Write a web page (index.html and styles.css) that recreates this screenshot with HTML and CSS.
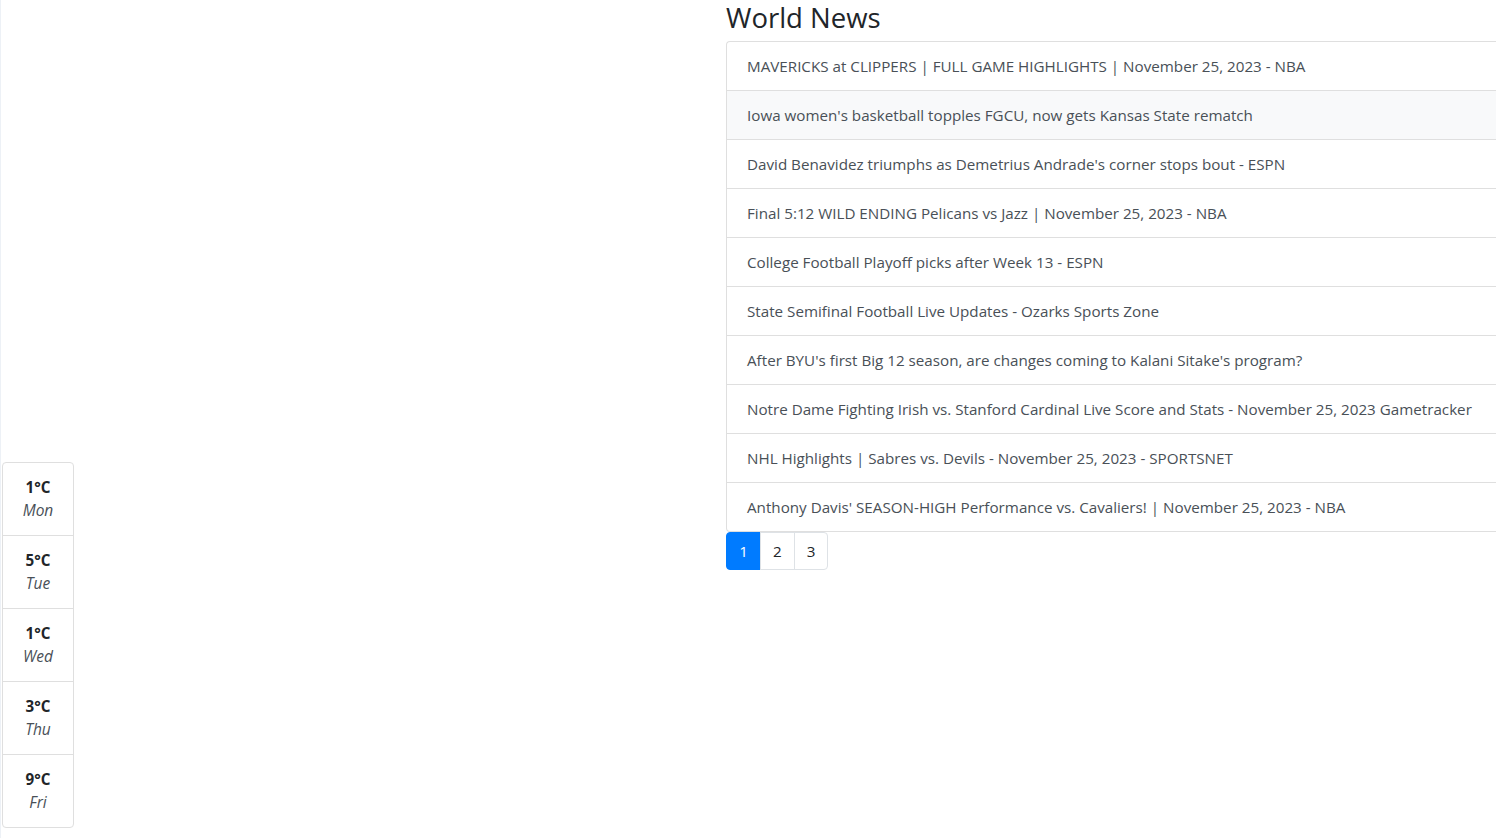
FILE: index.html
```html
<!DOCTYPE html>
<html lang="en">
<head>
<meta charset="utf-8">
<title>World News</title>
<link rel="stylesheet" href="styles.css">
</head>
<body>
<div class="page">
  <aside class="side">
    <ul class="weather">
      <li class="day"><strong>1°C</strong><em>Mon</em></li>
      <li class="day"><strong>5°C</strong><em>Tue</em></li>
      <li class="day"><strong>1°C</strong><em>Wed</em></li>
      <li class="day"><strong>3°C</strong><em>Thu</em></li>
      <li class="day"><strong>9°C</strong><em>Fri</em></li>
    </ul>
  </aside>
  <main class="news">
    <h3 class="title">World News</h3>
    <div class="list">
      <a class="item" href="#">MAVERICKS at CLIPPERS | FULL GAME HIGHLIGHTS | November 25, 2023 - NBA</a>
      <a class="item hover" href="#">Iowa women's basketball topples FGCU, now gets Kansas State rematch</a>
      <a class="item" href="#">David Benavidez triumphs as Demetrius Andrade's corner stops bout - ESPN</a>
      <a class="item" href="#">Final 5:12 WILD ENDING Pelicans vs Jazz | November 25, 2023 - NBA</a>
      <a class="item" href="#">College Football Playoff picks after Week 13 - ESPN</a>
      <a class="item" href="#">State Semifinal Football Live Updates - Ozarks Sports Zone</a>
      <a class="item" href="#">After BYU's first Big 12 season, are changes coming to Kalani Sitake's program?</a>
      <a class="item" href="#">Notre Dame Fighting Irish vs. Stanford Cardinal Live Score and Stats - November 25, 2023 Gametracker</a>
      <a class="item" href="#">NHL Highlights | Sabres vs. Devils - November 25, 2023 - SPORTSNET</a>
      <a class="item" href="#">Anthony Davis' SEASON-HIGH Performance vs. Cavaliers! | November 25, 2023 - NBA</a>
    </div>
    <ul class="pager">
      <li class="pg active">1</li>
      <li class="pg">2</li>
      <li class="pg">3</li>
    </ul>
  </main>
</div>
</body>
</html>
```
FILE: styles.css
```css
* { box-sizing: border-box; }
html, body { margin: 0; padding: 0; }
body {
  font-family: "Open Sans", "Noto Sans", sans-serif;
  font-size: 15.2px;
  line-height: 24px;
  color: #212529;
  background: #fff;
  overflow: hidden;
}
.page {
  display: flex;
  min-height: 838px;
  border-left: 1px solid #edf1f6;
  width: 1496px;
}
.side {
  width: 725px;
  flex: none;
  display: flex;
  flex-direction: column;
  justify-content: flex-end;
  padding: 0 0 10px 1px;
}
.weather {
  list-style: none;
  margin: 0;
  padding: 0;
  width: 72px;
  border: 1px solid #dfdfdf;
  border-radius: 4px;
}
.day {
  display: flex;
  flex-direction: column;
  align-items: center;
  height: 73px;
  padding-top: 12px;
  border-top: 1px solid #dfdfdf;
}
.day:first-child { border-top: 0; height: 72px; padding-top: 12px; }
.day strong { font-weight: 700; line-height: 24px; }
.day em { font-style: italic; color: #495057; line-height: 22px; font-size: 15.5px; }
.news {
  flex: none;
  width: 800px;
}
.title {
  margin: 0 0 6px;
  font-size: 27.5px;
  line-height: 35px;
  font-weight: 500;
  color: #212529;
}
.list {
  border: 1px solid #dfdfdf;
  border-radius: 4px 0 0 4px;
  border-right: 0;
}
.item {
  display: block;
  padding: 12px 20px;
  height: 49px;
  border-top: 1px solid #dfdfdf;
  color: #495057;
  text-decoration: none;
  white-space: nowrap;
}
.item:first-child { border-top: 0; height: 48px; }
.item.hover { background: #f8f9fa; }
.pager {
  list-style: none;
  display: flex;
  margin: 0;
  padding: 0;
}
.pg {
  height: 38px;
  padding: 6px 12px;
  border: 1px solid #dee2e6;
  margin-left: -1px;
  color: #212529;
}
.pg:first-child { margin-left: 0; border-radius: 4px 0 0 4px; }
.pg:last-child { border-radius: 0 4px 4px 0; }
.pg.active { background: #007bff; border-color: #007bff; color: #fff; width: 35px; text-align: center; }
```
